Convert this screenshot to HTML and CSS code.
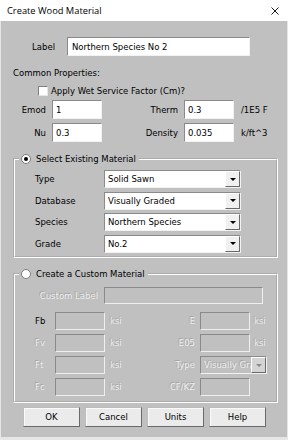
FILE: index.html
```
<!DOCTYPE html>
<html lang="en">
<head>
  <meta charset="UTF-8" />
  <title>Create Wood Material</title>
  <link rel="stylesheet" href="styles.css">
</head>
<body>
<div class="dlg">

  <!-- title bar -->
  <div class="titlebar">
    <span class="title">Create Wood Material</span>
    <svg class="close" width="8" height="8" viewBox="0 0 8 8">
      <path d="M0.5 0.5L7.5 7.5M7.5 0.5L0.5 7.5" stroke="#1a1a1a" stroke-width="1" fill="none"/>
    </svg>
  </div>

  <div class="pane">

    <div class="label-row">
      <span class="label-lbl">Label</span>
      <input class="edit label-edit" value="Northern Species No 2">
    </div>

    <div class="caption">Common Properties:</div>

    <div class="check-row">
      <span class="check"></span>
      <span>Apply Wet Service Factor (Cm)?</span>
    </div>

    <div class="prop-row row-a">
      <span class="l1">Emod</span>
      <input class="edit small" value="1">
      <span class="l2">Therm</span>
      <input class="edit small" value="0.3">
      <span class="unit">/1E5 F</span>
    </div>
    <div class="prop-row row-b">
      <span class="l1">Nu</span>
      <input class="edit small" value="0.3">
      <span class="l2">Density</span>
      <input class="edit small" value="0.035">
      <span class="unit">k/ft^3</span>
    </div>

    <!-- existing material -->
    <fieldset class="grp grp-existing">
      <legend><span class="legend"><span class="radio on"></span>Select Existing Material</span></legend>
      <div class="grp-grid">
        <span>Type</span>
        <div class="combo"><span class="combo-text">Solid Sawn</span><span class="combo-btn"></span></div>
        <span>Database</span>
        <div class="combo"><span class="combo-text">Visually Graded</span><span class="combo-btn"></span></div>
        <span>Species</span>
        <div class="combo"><span class="combo-text">Northern Species</span><span class="combo-btn"></span></div>
        <span>Grade</span>
        <div class="combo"><span class="combo-text">No.2</span><span class="combo-btn"></span></div>
      </div>
    </fieldset>

    <!-- custom material (disabled) -->
    <fieldset class="grp grp-custom">
      <legend><span class="legend"><span class="radio"></span>Create a Custom Material</span></legend>
      <div class="cust">
        <div class="cust-row">
          <span class="cl dis">Custom Label</span>
          <span class="box off wide"></span>
        </div>
        <div class="cust-grid">
          <div class="cust-line">
            <span class="c-l1">Fb</span><span class="box off"></span><span class="c-u1 dis">ksi</span>
            <span class="c-l2 dis">E</span><span class="box off"></span><span class="c-u2 dis">ksi</span>
          </div>
          <div class="cust-line">
            <span class="c-l1 dis">Fv</span><span class="box off"></span><span class="c-u1 dis">ksi</span>
            <span class="c-l2 dis">E05</span><span class="box off"></span><span class="c-u2 dis">ksi</span>
          </div>
          <div class="cust-line">
            <span class="c-l1 dis">Ft</span><span class="box off"></span><span class="c-u1 dis">ksi</span>
            <span class="c-l2 dis">Type</span>
            <div class="combo combo-off"><span class="combo-text dis">Visually Graded</span><span class="combo-btn"></span></div>
          </div>
          <div class="cust-line">
            <span class="c-l1 dis">Fc</span><span class="box off"></span><span class="c-u1 dis">ksi</span>
            <span class="c-l2 dis">CF/KZ</span><span class="box off"></span>
          </div>
        </div>
      </div>
    </fieldset>

    <div class="btns">
      <button class="btn">OK</button>
      <button class="btn">Cancel</button>
      <button class="btn">Units</button>
      <button class="btn">Help</button>
    </div>

  </div>
</div>
</body>
</html>
```

FILE: styles.css
```
body {
  margin: 0;
  font-family: "DejaVu Sans", sans-serif;
  font-size: 8.5px;
  color: #000;
}
.dlg {
  width: 288px;
  height: 440px;
  background: #e6e6e6;
  display: flex;
  flex-direction: column;
}
.titlebar {
  height: 21px;
  flex-shrink: 0;
  background: #fff;
  display: flex;
  align-items: center;
  justify-content: space-between;
  padding: 0 9px 0 7px;
}
.title {
  font-family: "Open Sans", sans-serif;
  font-size: 9.3px;
  color: #000;
}
.close {
  display: block;
}
.pane {
  margin: 0 1px 3px;
  height: 416px;
  background: #c0c0c0;
  overflow: hidden;
}

/* edits */
.edit {
  box-sizing: border-box;
  font: inherit;
  color: #000;
  margin: 0;
  padding: 0 3px;
  background: #fff;
  border: 1px solid;
  border-color: #8a8a8a #f2f2f2 #f2f2f2 #8a8a8a;
  outline: none;
}
.label-row {
  display: flex;
  align-items: center;
  height: 19px;
  margin-top: 16px;
}
.label-lbl {
  width: 54px;
  text-align: right;
  margin-right: 12px;
}
.label-edit {
  width: 183px;
  height: 19px;
  padding-left: 4px;
}
.caption {
  margin-top: 11px;
  line-height: 12px;
  padding-left: 12px;
}
.check-row {
  display: flex;
  align-items: center;
  height: 12px;
  margin-top: 6px;
  padding-left: 37px;
}
.check {
  width: 10px;
  height: 10px;
  box-sizing: border-box;
  background: #fff;
  border: 1px solid;
  border-color: #808080 #e6e6e6 #e6e6e6 #808080;
  margin-right: 3px;
}
.prop-row {
  display: flex;
  align-items: center;
  height: 19px;
}
.row-a { margin-top: 3px; }
.row-b { margin-top: 4px; }
.prop-row .l1 {
  width: 45px;
  text-align: right;
  margin-right: 6px;
}
.prop-row .l2 {
  width: 76px;
  text-align: right;
  margin-right: 6px;
}
.small {
  width: 50px;
  height: 19px;
}
.unit {
  margin-left: 7px;
}

/* group boxes */
.grp {
  margin: 11px 9px 0 12px;
  padding: 0;
  min-width: 0;
  border: 2px groove #fff;
}
.grp-custom {
  margin-top: 10px;
}
.grp legend {
  margin-left: 4px;
  padding: 0 3px 0 2px;
  line-height: 12px;
}
.legend {
  display: inline-flex;
  align-items: center;
  vertical-align: top;
  height: 12px;
}
.radio {
  width: 10px;
  height: 10px;
  box-sizing: border-box;
  border-radius: 50%;
  background: #fff;
  border: 1px solid #7c7c7c;
  margin-right: 5px;
  display: inline-flex;
  align-items: center;
  justify-content: center;
}
.radio.on::after {
  content: "";
  width: 4px;
  height: 4px;
  border-radius: 50%;
  background: #000;
}
.grp-grid {
  display: grid;
  grid-template-columns: 69px 137px;
  grid-auto-rows: 18px;
  row-gap: 3.5px;
  align-items: center;
  padding: 5px 0 3.5px 20px;
}

/* combo boxes */
.combo {
  box-sizing: border-box;
  height: 18px;
  display: flex;
  align-items: center;
  background: #fff;
  border: 1px solid;
  border-color: #8a8a8a #f2f2f2 #f2f2f2 #8a8a8a;
  padding-left: 3px;
}
.combo-text {
  flex: 1;
  overflow: hidden;
  white-space: nowrap;
}
.combo-btn {
  width: 15px;
  height: 100%;
  box-sizing: border-box;
  background: #f0f0f0;
  border: 1px solid;
  border-color: #fff #696969 #696969 #fff;
  display: flex;
  align-items: center;
  justify-content: center;
}
.combo-btn::after {
  content: "";
  border-left: 3px solid transparent;
  border-right: 3px solid transparent;
  border-top: 3px solid #000;
}
.combo-off {
  width: 67px;
  background: #c0c0c0;
  margin-left: 0;
}
.combo-off .combo-btn {
  background: #d4d4d4;
}
.combo-off .combo-btn::after {
  border-top-color: #8a8a8a;
}

/* custom material */
.cust {
  padding: 7px 0 5px 20px;
}
.cust-row {
  display: flex;
  align-items: center;
  height: 17px;
}
.cl {
  width: 63px;
  text-align: right;
  margin-right: 6px;
}
.box {
  box-sizing: border-box;
  width: 50px;
  height: 18px;
  border: 1px solid;
}
.box.off {
  background: #c0c0c0;
  border-color: #8a8a8a #efefef #efefef #8a8a8a;
}
.box.wide {
  width: 159px;
  height: 17px;
}
.cust-grid {
  display: grid;
  grid-auto-rows: 18px;
  row-gap: 4px;
  margin-top: 8px;
}
.cust-line {
  display: flex;
  align-items: center;
}
.c-l1 { width: 20px; }
.c-u1 { width: 55px; margin-left: 5px; }
.c-l2 { width: 30px; text-align: right; margin-right: 5px; }
.c-u2 { margin-left: 4px; }
.dis {
  color: #ededed;
  text-shadow: -1px -1px 0 rgba(130, 130, 130, 0.45);
}

/* buttons */
.btns {
  display: flex;
  gap: 5px;
  padding-left: 22px;
  margin-top: 4px;
}
.btn {
  width: 57px;
  height: 20px;
  box-sizing: border-box;
  padding: 0;
  font: inherit;
  color: #000;
  background: #ebebeb;
  border: 1px solid;
  border-color: #bdbdbd #6a6a6a #6a6a6a #bdbdbd;
  box-shadow: inset 1px 1px 0 #fafafa;
}
```
